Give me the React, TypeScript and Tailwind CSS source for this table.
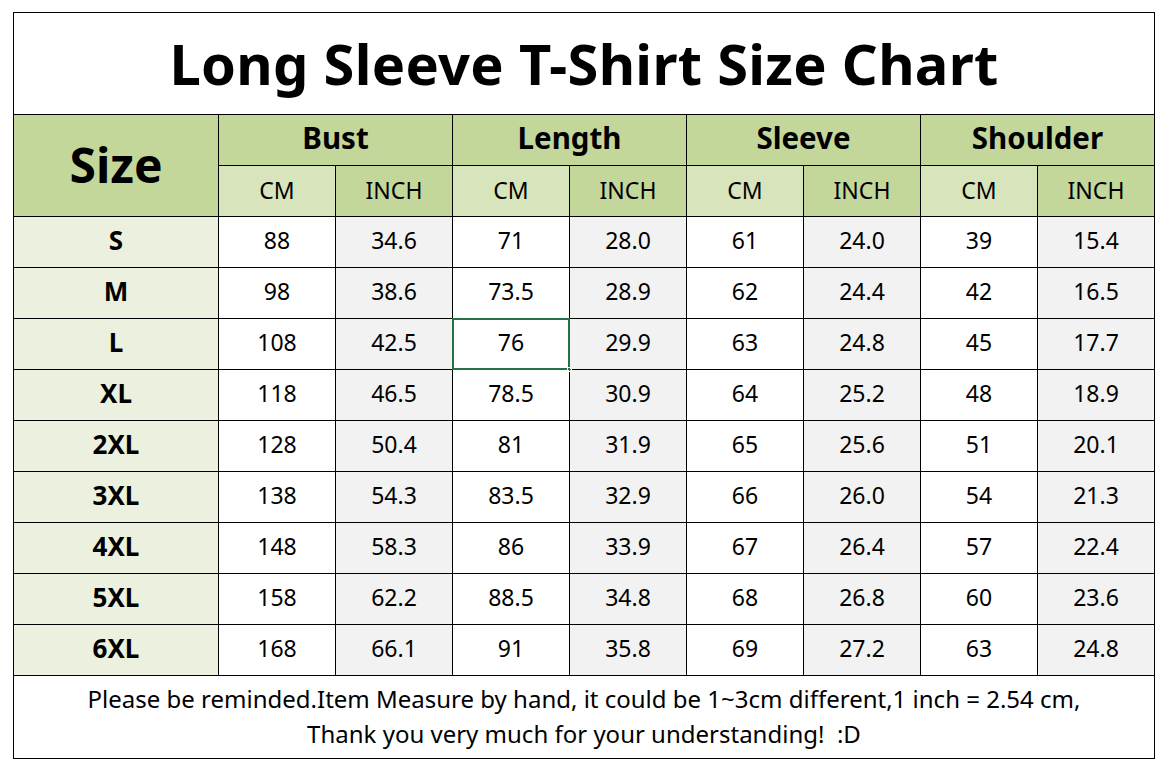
import React from "react";

const rows: [string, string[]][] = [
  ["S", ["88", "34.6", "71", "28.0", "61", "24.0", "39", "15.4"]],
  ["M", ["98", "38.6", "73.5", "28.9", "62", "24.4", "42", "16.5"]],
  ["L", ["108", "42.5", "76", "29.9", "63", "24.8", "45", "17.7"]],
  ["XL", ["118", "46.5", "78.5", "30.9", "64", "25.2", "48", "18.9"]],
  ["2XL", ["128", "50.4", "81", "31.9", "65", "25.6", "51", "20.1"]],
  ["3XL", ["138", "54.3", "83.5", "32.9", "66", "26.0", "54", "21.3"]],
  ["4XL", ["148", "58.3", "86", "33.9", "67", "26.4", "57", "22.4"]],
  ["5XL", ["158", "62.2", "88.5", "34.8", "68", "26.8", "60", "23.6"]],
  ["6XL", ["168", "66.1", "91", "35.8", "69", "27.2", "63", "24.8"]],
];

const groups = ["Bust", "Length", "Sleeve", "Shoulder"];

export default function App() {
  return (
    <div
      className="w-[1167px] h-[772px] bg-white text-black"
      style={{ fontFamily: '"Noto Sans", "Open Sans", sans-serif' }}
    >
      <div className="pt-[12px] pl-[13px]">
        <div className="grid w-[1142px] grid-cols-[204px_repeat(8,116px)] grid-rows-[101px_50px_50px_repeat(9,50px)_82px] gap-px bg-black p-px">
          <div className="col-span-9 flex items-center justify-center bg-white pb-[2px] text-[56px] font-bold tracking-[0.3px]">
            Long Sleeve T-Shirt Size Chart
          </div>
          <div className="row-span-2 flex items-center justify-center bg-[#c4d79b] text-[48px] font-bold pb-[2px]">
            Size
          </div>
          {groups.map((g) => (
            <div
              key={g}
              className="col-span-2 flex items-center justify-center bg-[#c4d79b] text-[29.5px] font-bold pb-[4px]"
            >
              {g}
            </div>
          ))}
          {groups.map((g) => (
            <React.Fragment key={g + "u"}>
              <div className="flex items-center justify-center bg-[#d8e4bc] text-[23px] pb-[2px]">CM</div>
              <div className="flex items-center justify-center bg-[#c4d79b] text-[23px] pb-[2px]">INCH</div>
            </React.Fragment>
          ))}
          {rows.map(([size, vals]) => (
            <React.Fragment key={size}>
              <div className="flex items-center justify-center bg-[#ebf1de] text-[26px] font-bold pb-[3px]">
                {size}
              </div>
              {vals.map((v, i) => {
                const selected = size === "L" && i === 2;
                return (
                  <div
                    key={i}
                    className={
                      "relative flex items-center justify-center text-[23px] pb-[3px] " +
                      (i % 2 === 1 ? "bg-[#f2f2f2]" : "bg-white")
                    }
                  >
                    {v}
                    {selected && (
                      <>
                        <div className="absolute -inset-px border-2 border-[#217346]" />
                        <div className="absolute -bottom-[3px] -right-[3px] h-[5px] w-[5px] bg-[#217346] border border-white" />
                      </>
                    )}
                  </div>
                );
              })}
            </React.Fragment>
          ))}
          <div className="col-span-9 flex flex-col items-center justify-center bg-white text-[24px] leading-[35px] pb-[2px]">
            <div>Please be reminded.Item Measure by hand, it could be 1~3cm different,1 inch = 2.54 cm,</div>
            <div>Thank you very much for your understanding!&nbsp; :D</div>
          </div>
        </div>
      </div>
    </div>
  );
}
